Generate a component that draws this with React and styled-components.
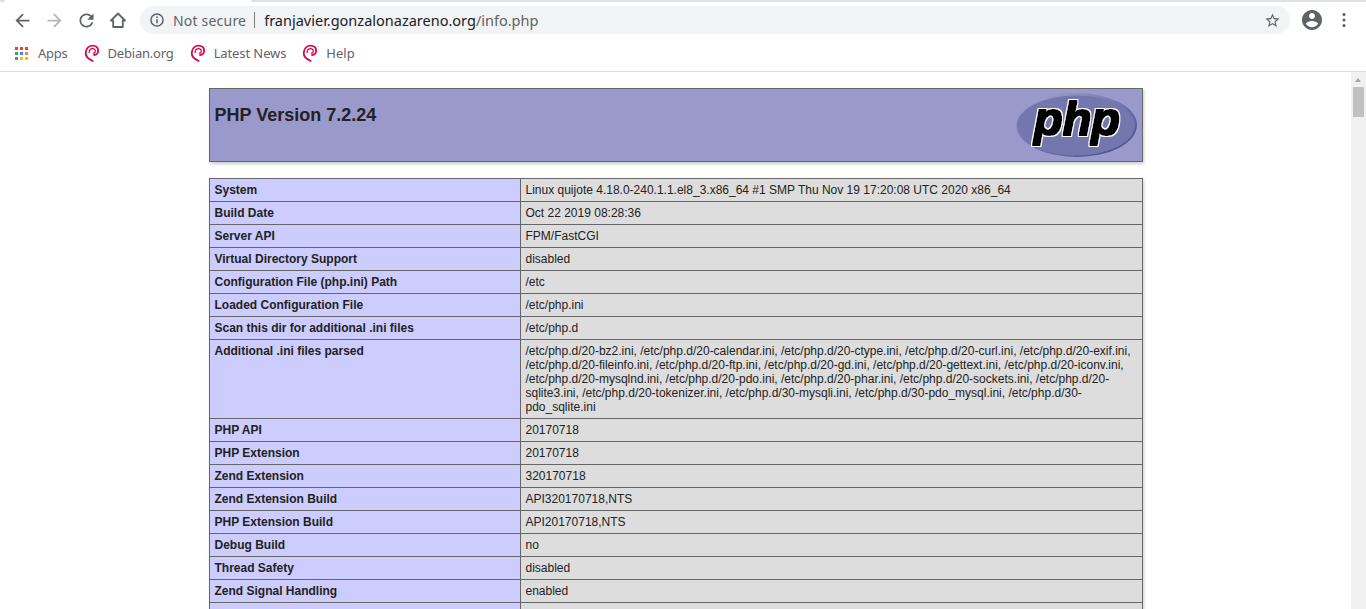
import React from "react";
import styled, { createGlobalStyle } from "styled-components";

const GlobalStyle = createGlobalStyle`
  html, body {
    margin: 0;
    height: 100%;
    overflow: hidden;
    background: #fff;
  }
`;

const Window = styled.div`
  display: flex;
  flex-direction: column;
  width: 1366px;
  height: 609px;
  overflow: hidden;
  font-family: "Noto Sans", sans-serif;
`;

const TabStrip = styled.div`
  display: flex;
  justify-content: space-between;
  height: 2px;
`;

const TabCorner = styled.div`
  width: 5px;
  background: #dee1e6;
  border-bottom-right-radius: 3px;
`;

const TabEdge = styled.div`
  width: 1115px;
  background: #dee1e6;
  border-bottom-left-radius: 3px;
`;

const Toolbar = styled.div`
  display: flex;
  align-items: center;
  height: 36px;
  padding-left: 6px;
  padding-right: 6px;
`;

const NavButton = styled.div`
  display: flex;
  align-items: center;
  justify-content: center;
  width: 32px;
  height: 32px;
  color: ${({ $disabled }) => ($disabled ? "#b4b6b9" : "#5f6368")};

  svg {
    display: block;
    fill: currentColor;
  }
`;

const Omnibox = styled.div`
  flex: 1;
  display: flex;
  align-items: center;
  height: 28px;
  margin-left: 6px;
  margin-right: 6px;
  padding: 0 9px 0 10px;
  border-radius: 14px;
  background: #f1f3f4;
  font-size: 14px;
  color: #5f6368;
`;

const SecurityLabel = styled.span`
  margin-left: 9px;
  letter-spacing: 0.2px;
`;

const Divider = styled.span`
  width: 1px;
  height: 16px;
  margin: 0 9px 0 8px;
  background: #7b7e82;
`;

const Host = styled.span`
  color: #202124;
`;

const Url = styled.span`
  flex: 1;
  font-size: 14.5px;
  white-space: nowrap;
`;

const BookmarkBar = styled.div`
  display: flex;
  align-items: center;
  gap: 16px;
  height: 30px;
  padding-left: 14px;
  padding-bottom: 3px;
  border-bottom: 1px solid #dadce0;
`;

const Bookmark = styled.div`
  display: flex;
  align-items: center;
  gap: 8px;
  font-size: 13px;
  color: #5f6368;
  letter-spacing: ${({ $spacing }) => $spacing || "0"};

  svg {
    margin-bottom: 1px;
  }
`;

const AppsGrid = styled.div`
  display: grid;
  grid-template-columns: repeat(3, 3px);
  grid-auto-rows: 3px;
  gap: 2px;
  margin: 0 2px 0 1px;
`;

const AppsDot = styled.i`
  background: ${({ $color }) => $color};
`;

const Viewport = styled.div`
  flex: 1;
  display: flex;
  min-height: 0;
`;

const Page = styled.div`
  flex: 1;
  overflow: hidden;
  padding: 16px 8px 0;
  font-family: "Liberation Sans", Arial, sans-serif;
  font-size: 16px;
  color: #222;
`;

const Scrollbar = styled.div`
  position: relative;
  width: 15px;
  background: #f1f1f1;
`;

const ScrollArrow = styled.div`
  position: absolute;
  top: 6px;
  left: 4px;
  width: 0;
  height: 0;
  border-left: 3.5px solid transparent;
  border-right: 3.5px solid transparent;
  border-bottom: 4px solid #a3a3a3;
`;

const ScrollThumb = styled.div`
  position: absolute;
  top: 15px;
  left: 2px;
  width: 11px;
  height: 30px;
  background: #c1c1c1;
`;

const InfoTable = styled.table`
  width: 934px;
  margin: 0 auto 16px;
  border-collapse: collapse;
  border: 0;
  box-shadow: 1px 2px 3px #ccc;
  text-align: left;
`;

const Cell = styled.td`
  border: 1px solid #666;
  padding: 4px 5px;
  font-size: 12px;
  vertical-align: baseline;
`;

const HeaderCell = styled(Cell)`
  padding-bottom: 3px;
  background: #99c;
  font-weight: bold;
`;

const NameCell = styled(Cell)`
  width: 300px;
  height: 14px;
  background: #ccf;
  font-weight: bold;
`;

const ValueCell = styled(Cell)`
  max-width: 300px;
  background: #ddd;
  overflow-wrap: break-word;
`;

const Title = styled.h1`
  margin: 12px 0;
  font-size: 18px;
`;

const Logo = styled.svg`
  float: right;
  display: block;
`;

const APPS_COLORS = [
  "#ea4335", "#ea4335", "#ea4335",
  "#34a853", "#4285f4", "#f9890d",
  "#34a853", "#fbbc05", "#fbbc05",
];

const ROWS = [
  ["System", "Linux quijote 4.18.0-240.1.1.el8_3.x86_64 #1 SMP Thu Nov 19 17:20:08 UTC 2020 x86_64"],
  ["Build Date", "Oct 22 2019 08:28:36"],
  ["Server API", "FPM/FastCGI"],
  ["Virtual Directory Support", "disabled"],
  ["Configuration File (php.ini) Path", "/etc"],
  ["Loaded Configuration File", "/etc/php.ini"],
  ["Scan this dir for additional .ini files", "/etc/php.d"],
  [
    "Additional .ini files parsed",
    "/etc/php.d/20-bz2.ini, /etc/php.d/20-calendar.ini, /etc/php.d/20-ctype.ini, /etc/php.d/20-curl.ini, /etc/php.d/20-exif.ini, /etc/php.d/20-fileinfo.ini, /etc/php.d/20-ftp.ini, /etc/php.d/20-gd.ini, /etc/php.d/20-gettext.ini, /etc/php.d/20-iconv.ini, /etc/php.d/20-mysqlnd.ini, /etc/php.d/20-pdo.ini, /etc/php.d/20-phar.ini, /etc/php.d/20-sockets.ini, /etc/php.d/20-sqlite3.ini, /etc/php.d/20-tokenizer.ini, /etc/php.d/30-mysqli.ini, /etc/php.d/30-pdo_mysql.ini, /etc/php.d/30-pdo_sqlite.ini",
  ],
  ["PHP API", "20170718"],
  ["PHP Extension", "20170718"],
  ["Zend Extension", "320170718"],
  ["Zend Extension Build", "API320170718,NTS"],
  ["PHP Extension Build", "API20170718,NTS"],
  ["Debug Build", "no"],
  ["Thread Safety", "disabled"],
  ["Zend Signal Handling", "enabled"],
  ["", ""],
];

function Swirl() {
  return (
    <svg width="16" height="18" viewBox="0 0 16 18" fill="none" stroke="#d70a53" strokeLinecap="round">
      <path
        d="M8.6 16.8C3.8 15 1.4 11.8 1.8 8.4 2.3 4.4 5.2 1.6 8.8 1.6c3 0 5.2 2.1 5.3 4.8.1 2.6-1.7 4.5-4 4.6"
        strokeWidth="1.9"
      />
      <path d="M5.2 8.6C4.9 6.3 6.6 4.6 8.6 4.7c1.7.1 2.8 1.3 2.7 2.6-.1 1.1-1 1.9-2 1.8" strokeWidth="1.3" />
    </svg>
  );
}

function PhpLogo() {
  return (
    <Logo width="121" height="65" viewBox="0 0 121 65">
      <defs>
        <linearGradient id="logoEdge" x1="0" y1="0" x2="1" y2="1">
          <stop offset="0" stopColor="#a9abd2" />
          <stop offset="0.5" stopColor="#7377ad" />
          <stop offset="1" stopColor="#3f4389" />
        </linearGradient>
        <filter id="logoInk" x="-10%" y="-10%" width="120%" height="120%">
          <feMorphology in="SourceAlpha" operator="dilate" radius="0.7" result="ink" />
          <feMorphology in="SourceAlpha" operator="dilate" radius="1.6" result="halo" />
          <feFlood floodColor="#fff" result="white" />
          <feComposite in="white" in2="halo" operator="in" result="outline" />
          <feMerge>
            <feMergeNode in="outline" />
            <feMergeNode in="ink" />
          </feMerge>
        </filter>
      </defs>
      <ellipse cx="60.5" cy="32" rx="60.5" ry="32" fill="url(#logoEdge)" />
      <ellipse cx="60" cy="32.5" rx="59" ry="30" fill="#7377ad" />
      <text
        x="61"
        y="42"
        textAnchor="middle"
        fontFamily="'Liberation Sans', Arial, sans-serif"
        fontSize="46"
        fontWeight="bold"
        fontStyle="italic"
        textLength="86"
        lengthAdjust="spacingAndGlyphs"
        fill="#000"
        filter="url(#logoInk)"
      >
        php
      </text>
    </Logo>
  );
}

export default function App() {
  return (
    <Window>
      <GlobalStyle />
      <TabStrip>
        <TabCorner />
        <TabEdge />
      </TabStrip>
      <Toolbar>
        <NavButton>
          <svg width="21" height="21" viewBox="0 0 24 24">
            <path d="M20 11H7.83l5.59-5.59L12 4l-8 8 8 8 1.41-1.41L7.83 13H20v-2z" />
          </svg>
        </NavButton>
        <NavButton $disabled>
          <svg width="21" height="21" viewBox="0 0 24 24">
            <path d="M4 11h12.17l-5.59-5.59L12 4l8 8-8 8-1.41-1.41L16.17 13H4v-2z" />
          </svg>
        </NavButton>
        <NavButton>
          <svg width="21" height="21" viewBox="0 0 24 24">
            <path d="M17.65 6.35C16.2 4.9 14.21 4 12 4c-4.42 0-7.99 3.58-7.99 8s3.57 8 7.99 8c3.73 0 6.84-2.55 7.73-6h-2.08c-.82 2.33-3.04 4-5.65 4-3.31 0-6-2.69-6-6s2.69-6 6-6c1.66 0 3.14.69 4.22 1.78L13 11h7V4l-2.35 2.35z" />
          </svg>
        </NavButton>
        <NavButton>
          <svg width="18" height="18" viewBox="0 0 18 18">
            <path d="M2 9.5 9 2.5l7 7h-2.2V16H4.2V9.5z" fill="none" stroke="currentColor" strokeWidth="1.8" strokeLinejoin="round" />
          </svg>
        </NavButton>
        <Omnibox>
          <svg width="14" height="14" viewBox="0 0 14 14" fill="none" stroke="currentColor">
            <circle cx="7" cy="7" r="6.1" strokeWidth="1.5" />
            <path d="M7 6.2v4M7 3.6v1.5" strokeWidth="1.6" />
          </svg>
          <SecurityLabel>Not secure</SecurityLabel>
          <Divider />
          <Url>
            <Host>franjavier.gonzalonazareno.org</Host>/info.php
          </Url>
          <svg width="17" height="17" viewBox="0 0 24 24" fill="currentColor">
            <path d="M22 9.24l-7.19-.62L12 2 9.19 8.63 2 9.24l5.46 4.73L5.82 21 12 17.27 18.18 21l-1.63-7.03L22 9.24zM12 15.4l-3.76 2.27 1-4.28-3.32-2.88 4.38-.38L12 6.1l1.71 4.04 4.38.38-3.32 2.88 1 4.28L12 15.4z" />
          </svg>
        </Omnibox>
        <NavButton>
          <svg width="24" height="24" viewBox="0 0 24 24">
            <path d="M12 2C6.48 2 2 6.48 2 12s4.48 10 10 10 10-4.48 10-10S17.52 2 12 2zm0 3c1.66 0 3 1.34 3 3s-1.34 3-3 3-3-1.34-3-3 1.34-3 3-3zm0 14.2c-2.5 0-4.71-1.28-6-3.22.03-1.99 4-3.08 6-3.08 1.99 0 5.97 1.09 6 3.08-1.29 1.94-3.5 3.22-6 3.22z" />
          </svg>
        </NavButton>
        <NavButton>
          <svg width="4" height="16" viewBox="0 0 4 16">
            <circle cx="2" cy="2.5" r="1.6" />
            <circle cx="2" cy="8" r="1.6" />
            <circle cx="2" cy="13.5" r="1.6" />
          </svg>
        </NavButton>
      </Toolbar>
      <BookmarkBar>
        <Bookmark $spacing="-0.25px">
          <AppsGrid>
            {APPS_COLORS.map((color, i) => (
              <AppsDot key={i} $color={color} />
            ))}
          </AppsGrid>
          Apps
        </Bookmark>
        <Bookmark $spacing="-0.2px">
          <Swirl />
          Debian.org
        </Bookmark>
        <Bookmark $spacing="-0.1px">
          <Swirl />
          Latest News
        </Bookmark>
        <Bookmark>
          <Swirl />
          Help
        </Bookmark>
      </BookmarkBar>
      <Viewport>
        <Page>
          <InfoTable>
            <tbody>
              <tr>
                <HeaderCell>
                  <PhpLogo />
                  <Title>PHP Version 7.2.24</Title>
                </HeaderCell>
              </tr>
            </tbody>
          </InfoTable>
          <InfoTable>
            <tbody>
              {ROWS.map(([name, value], i) => (
                <tr key={i}>
                  <NameCell>{name}</NameCell>
                  <ValueCell>{value}</ValueCell>
                </tr>
              ))}
            </tbody>
          </InfoTable>
        </Page>
        <Scrollbar>
          <ScrollArrow />
          <ScrollThumb />
        </Scrollbar>
      </Viewport>
    </Window>
  );
}
